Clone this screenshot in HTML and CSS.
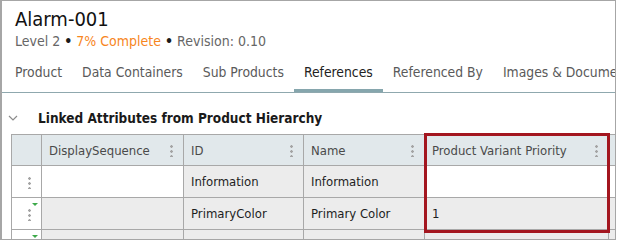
FILE: index.html
```html
<!DOCTYPE html>
<html lang="en">

<head>
     <meta charset="UTF-8">
     <title>Alarm-001 | References</title>
     <link rel="stylesheet" href="styles.css">
</head>

<body>

     <div id="frame">
          <div class="product-head">
               <h1 class="title">Alarm-001</h1>
               <div class="meta">Level 2 <b class="dot">&bull;</b> <span class="progress">7% Complete</span> <b class="dot">&bull;</b> Revision: 0.10</div>
          </div>

          <div class="tabs">
               <div class="tab">Product</div>
               <div class="tab">Data Containers</div>
               <div class="tab">Sub Products</div>
               <div class="tab active-tab">References</div>
               <div class="tab">Referenced By</div>
               <div class="tab">Images &amp; Documents</div>
          </div>

          <div class="section">
               <div class="section-title">
                    <svg class="chevron" width="10" height="6" viewBox="0 0 10 6">
                         <path d="M1 1 L5 5 L9 1" fill="none" stroke="#8c8c8c" stroke-width="1.2" />
                    </svg>
                    <span>Linked Attributes from Product Hierarchy</span>
               </div>

               <div class="grid-wrap">
                    <div class="grid">
                         <!-- header -->
                         <div class="cell head"></div>
                         <div class="cell head"><span>DisplaySequence</span><i class="kebab"></i></div>
                         <div class="cell head"><span>ID</span><i class="kebab"></i></div>
                         <div class="cell head"><span>Name</span><i class="kebab"></i></div>
                         <div class="cell head"><span>Product Variant Priority</span><i class="kebab"></i></div>
                         <div class="cell head"><i class="kebab"></i></div>

                         <!-- row 1 -->
                         <div class="cell handle"><i class="kebab"></i></div>
                         <div class="cell"></div>
                         <div class="cell grey">Information</div>
                         <div class="cell grey">Information</div>
                         <div class="cell"></div>
                         <div class="cell"></div>

                         <!-- row 2 -->
                         <div class="cell handle changed"><i class="kebab"></i></div>
                         <div class="cell grey"></div>
                         <div class="cell grey">PrimaryColor</div>
                         <div class="cell grey">Primary Color</div>
                         <div class="cell grey">1</div>
                         <div class="cell grey"></div>

                         <!-- row 3 -->
                         <div class="cell handle changed"><i class="kebab"></i></div>
                         <div class="cell grey"></div>
                         <div class="cell grey"></div>
                         <div class="cell grey"></div>
                         <div class="cell grey"></div>
                         <div class="cell grey"></div>
                    </div>
                    <div class="highlight"></div>
               </div>
          </div>
     </div>

</body>

</html>
```

FILE: styles.css
```css
* {
     padding: 0;
     margin: 0;
     box-sizing: border-box;
     font-family: 'DejaVu Sans Condensed', 'DejaVu Sans', sans-serif;
}

body {
     background: #ffffff;
}

#frame {
     width: 616px;
     height: 240px;
     border: 1px solid #a6a6a6;
     border-left-width: 2px;
     overflow: hidden;
     background: #ffffff;
}

.product-head {
     padding: 6px 0 0 13px;
}

.title {
     font-size: 20px;
     font-weight: normal;
     line-height: 24px;
     color: #111111;
}

.meta {
     margin-top: 1px;
     font-size: 14px;
     line-height: 18px;
     color: #666666;
}

.meta .dot {
     color: #1a1a1a;
}

.meta .progress {
     color: #f7861e;
}

.tabs {
     display: flex;
     margin-top: 11px;
     padding-left: 3px;
     border-bottom: 1px solid #8fa8ae;
     white-space: nowrap;
}

.tab {
     padding: 0 10px 6px;
     font-size: 13.8px;
     line-height: 22px;
     color: #5a5a5a;
     border-bottom: 3px solid transparent;
}

.active-tab {
     color: #222222;
     border-bottom-color: #86a6ad;
}

.section {
     padding-top: 15px;
}

.section-title {
     display: flex;
     align-items: center;
     gap: 20px;
     padding-left: 6px;
     height: 20px;
     font-size: 13.5px;
}

.section-title span {
     font-family: inherit;
     font-weight: bold;
     color: #1a1a1a;
}

.grid-wrap {
     position: relative;
     margin: 6px 0 0 9px;
}

.grid {
     display: grid;
     grid-template-columns: 30px 142px 120px 121px 184px 60px;
     grid-template-rows: 31px 32px 32px 32px;
     border-top: 1px solid #a8a8a8;
     border-left: 1px solid #a8a8a8;
     width: max-content;
}

.cell {
     position: relative;
     display: flex;
     align-items: center;
     padding-left: 7px;
     font-size: 13px;
     color: #1e1e1e;
     border-right: 1px solid #a8a8a8;
     border-bottom: 1px solid #a8a8a8;
     background: #ffffff;
     white-space: nowrap;
}

.cell.grey {
     background: #ececec;
}

.cell.head {
     background: #e1e8eb;
     color: #4a4a4a;
}

.kebab {
     position: absolute;
     right: 10px;
     top: 50%;
     width: 3px;
     height: 13px;
     margin-top: -6px;
     background: radial-gradient(circle, #a4a4a4 1.2px, transparent 1.5px) 0 0 / 3px 5px repeat-y;
}

.cell.handle .kebab {
     right: auto;
     left: 16px;
}

.cell.changed::after {
     content: "";
     position: absolute;
     left: 20px;
     top: 5px;
     border-left: 3px solid transparent;
     border-right: 3px solid transparent;
     border-top: 3px solid #3daa4a;
}

.highlight {
     position: absolute;
     left: 413px;
     top: -1px;
     width: 186px;
     height: 100px;
     border: 3px solid #a3161f;
}
```
